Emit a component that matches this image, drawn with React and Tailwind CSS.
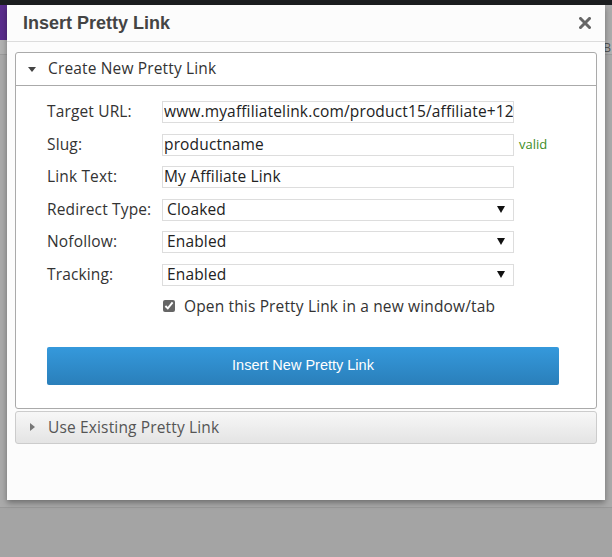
import { useState } from "react";

const rows = [
  { label: "Target URL:", value: "www.myaffiliatelink.com/product15/affiliate+123" },
  { label: "Slug:", value: "productname", note: "valid" },
  { label: "Link Text:", value: "My Affiliate Link" },
  { label: "Redirect Type:", value: "Cloaked", select: true },
  { label: "Nofollow:", value: "Enabled", select: true },
  { label: "Tracking:", value: "Enabled", select: true },
];

function Field({ label, value, note, select }) {
  return (
    <div className="flex items-center h-[22px]">
      <label className="w-[115px] shrink-0 text-[15.5px] tracking-[0.15px] text-[#333] whitespace-nowrap">{label}</label>
      {select ? (
        <div className="relative w-[352px] h-[22px] border border-[#ddd] bg-white flex items-center pl-[4px] text-[15.5px] tracking-[0.15px] text-[#222]">
          {value}
          <span className="absolute right-[8px] top-[6px] w-0 h-0 border-l-[4px] border-r-[4px] border-t-[7px] border-l-transparent border-r-transparent border-t-[#111]" />
        </div>
      ) : (
        <input
          readOnly
          value={value}
          className="w-[352px] h-[22px] border border-[#ddd] bg-white pl-[1px] text-[15.5px] tracking-[0.15px] text-[#222] outline-none"
        />
      )}
      {note && <span className="ml-[5px] text-[13px] text-[#3c8d1d]">{note}</span>}
    </div>
  );
}

export default function App() {
  const [newWindow, setNewWindow] = useState(true);

  return (
    <div
      className="relative w-[612px] h-[557px] overflow-hidden bg-[#a9a9a9]"
      style={{ fontFamily: '"Open Sans", "Liberation Sans", sans-serif' }}
    >
      {/* dimmed admin page behind the overlay */}
      <div className="h-[5px] bg-[#1c1e20]" />
      <div className="flex h-[35px]">
        <div className="w-[7px] bg-[#5a2d8c]" />
        <div className="flex-1 bg-[#acacac]" />
      </div>
      <div className="h-[15px] bg-[#b2b2b2] border-b border-[#9c9c9c] text-[#555] text-[12px] leading-[15px] text-right pr-[1px]">
        B
      </div>
      <div className="h-[452px] bg-[#aaaaaa]" />
      <div className="h-[50px] bg-[#a4a4a4] border-t border-[#999]" />

      {/* modal */}
      <div className="absolute left-[7px] top-[5px] w-[598px] h-[495px] bg-[#fcfcfc] shadow-[0_3px_6px_rgba(0,0,0,0.35)] flex flex-col">
        <div className="h-[37px] shrink-0 border-b border-[#dcdcdc] flex items-center justify-between pl-[16px] pr-[13px]">
          <h1
            className="text-[18px] font-bold text-[#444]"
            style={{ fontFamily: '"Liberation Sans", Arial, sans-serif' }}
          >
            Insert Pretty Link
          </h1>
          <svg width="12" height="12" viewBox="0 0 12 12" className="mr-[1px]">
            <path d="M1.5 1.5 L10.5 10.5 M10.5 1.5 L1.5 10.5" stroke="#666" strokeWidth="3" strokeLinecap="square" />
          </svg>
        </div>

        <div className="px-[8px] pt-[10px] flex flex-col gap-[2px]">
          <div className="border border-[#aaa] rounded-[3px] bg-white">
            <div className="h-[33px] border-b border-[#aaa] flex items-center pl-[12px] text-[15.5px] tracking-[0.15px] text-[#333]">
              <span className="w-0 h-0 border-l-[4px] border-r-[4px] border-t-[5px] border-l-transparent border-r-transparent border-t-[#444] mr-[12px]" />
              Create New Pretty Link
            </div>
            <div className="pl-[31px] pt-[15px] pb-[23px]">
              <div className="flex flex-col gap-[10.5px]">
                {rows.map((r) => (
                  <Field key={r.label} {...r} />
                ))}
              </div>
              <label className="flex items-center ml-[116px] mt-[9px] text-[15.5px] tracking-[0.15px] text-[#333] gap-[9px]">
                <input
                  type="checkbox"
                  checked={newWindow}
                  onChange={(e) => setNewWindow(e.target.checked)}
                  className="w-[12px] h-[12px] accent-[#666]"
                />
                Open this Pretty Link in a new window/tab
              </label>
              <button
                className="mt-[29px] w-[512px] h-[38px] rounded-[2px] bg-gradient-to-b from-[#3599dc] to-[#2a7fba] text-white text-[14.5px]"
                style={{ fontFamily: '"Liberation Sans", Arial, sans-serif' }}
              >
                Insert New Pretty Link
              </button>
            </div>
          </div>

          <div className="h-[33px] border border-[#ccc] rounded-[3px] bg-gradient-to-b from-[#f7f7f7] to-[#e4e4e4] flex items-center pl-[14px] text-[15.5px] tracking-[0.15px] text-[#555]">
            <span className="w-0 h-0 border-t-[4px] border-b-[4px] border-l-[5px] border-t-transparent border-b-transparent border-l-[#777] mr-[13px]" />
            Use Existing Pretty Link
          </div>
        </div>
      </div>
    </div>
  );
}
